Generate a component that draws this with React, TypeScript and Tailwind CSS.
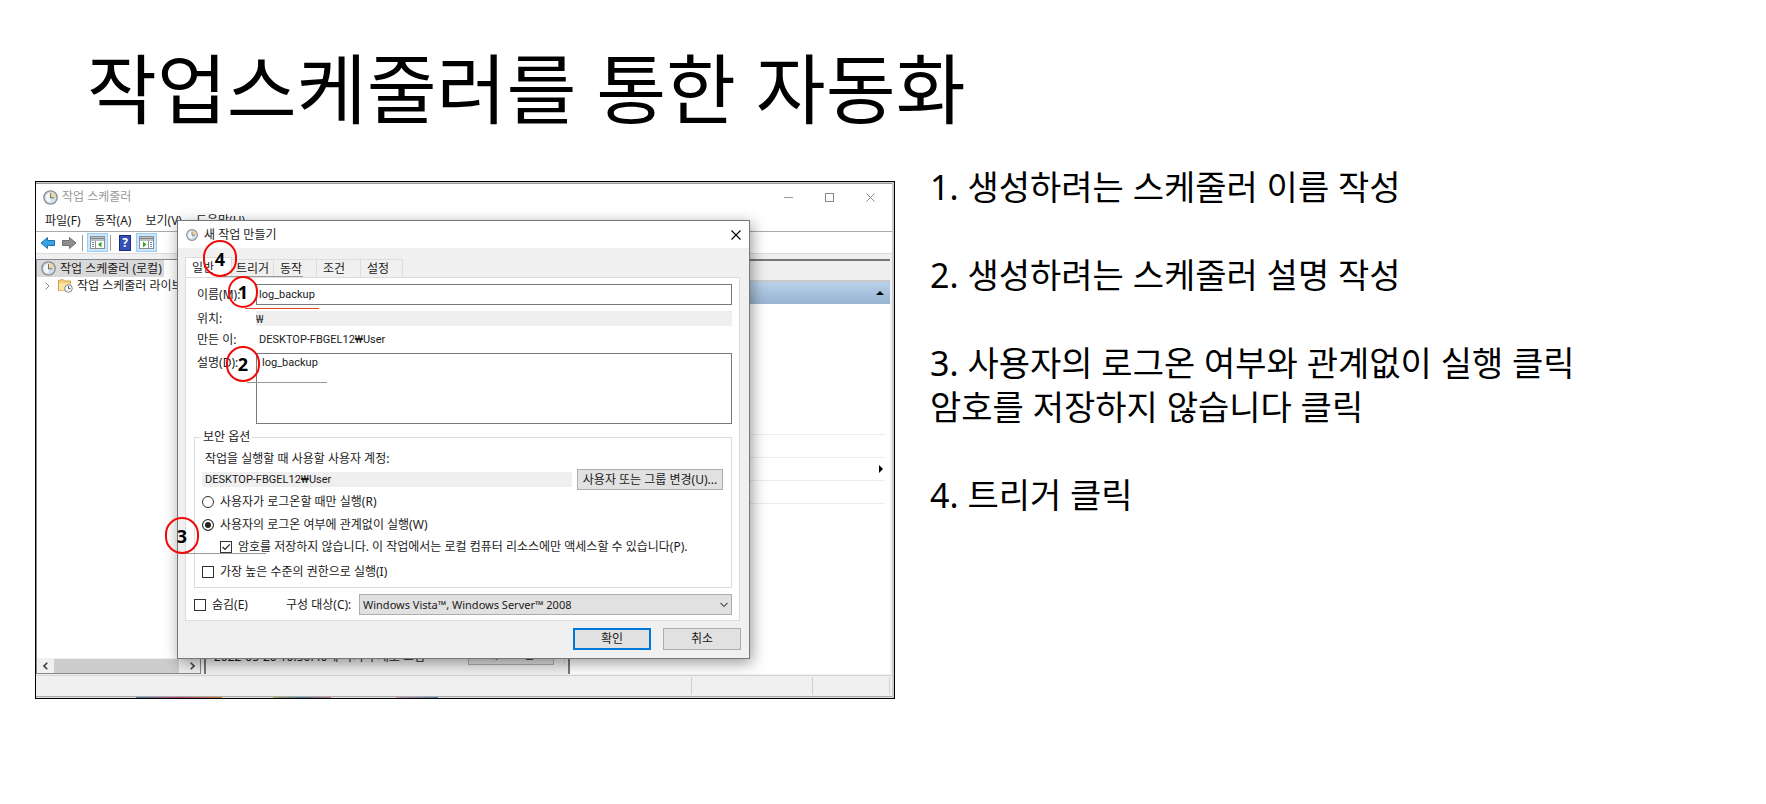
import { ReactNode } from "react";

const steps = [
  ["1. 생성하려는 스케줄러 이름 작성"],
  ["2. 생성하려는 스케줄러 설명 작성"],
  ["3. 사용자의 로그온 여부와 관계없이 실행 클릭", "암호를 저장하지 않습니다 클릭"],
  ["4. 트리거 클릭"],
];

const menus = ["파일(F)", "동작(A)", "보기(V)", "도움말(H)"];

// ---- Icons ----
function ClockIcon({ className }: { className: string }) {
  return (
    <svg className={className} viewBox="0 0 16 16" aria-hidden="true">
      <circle cx="8" cy="8" r="7.1" fill="#dfe5ea" stroke="#8b9095" strokeWidth="1.5" />
      <circle cx="8" cy="8" r="5.6" fill="#f3f7fa" stroke="#b9c6d2" strokeWidth="0.6" />
      <path d="M8 8V2.4A5.6 5.6 0 0 1 13.6 8Z" fill="#f3d69a" />
      <path d="M8 8H13.6A5.6 5.6 0 0 1 8 13.6Z" fill="#d3e0ea" />
      <path d="M8 3.5V8.3H12" fill="none" stroke="#66727e" strokeWidth="1.1" />
    </svg>
  );
}

function ArrowIcon({ fill, stroke, flip }: { fill: string; stroke: string; flip?: boolean }) {
  return (
    <svg className={flip ? "h-4 w-4 -scale-x-100" : "h-4 w-4"} viewBox="0 0 16 16" aria-hidden="true">
      <path d="M1 8 7.5 2.5V5.5H14.5V10.5H7.5V13.5Z" fill={fill} stroke={stroke} strokeLinejoin="round" />
    </svg>
  );
}

function PaneIcon({ right }: { right?: boolean }) {
  return (
    <svg className="h-[13px] w-[15px]" viewBox="0 0 15 13" aria-hidden="true">
      <rect x="0.5" y="0.5" width="14" height="12" fill="#fff" stroke="#8a8f94" />
      <path d="M1 2.5H14" stroke="#7b8288" strokeWidth="2" />
      <path d="M1 4.5H14" stroke="#b8bec4" />
      <path d={right ? "M9.5 5V12" : "M5.5 5V12"} stroke="#8a8f94" />
      <path
        d={right ? "M11 6.5H13M11 8.5H13M11 10.5H13" : "M2 6.5H4M2 8.5H4M2 10.5H4"}
        stroke="#5b88b5"
      />
      <path d={right ? "M4 5.5V11.5L7.5 8.5Z" : "M11.5 5.5V11.5L8 8.5Z"} fill="#3aa52c" />
    </svg>
  );
}

function FolderIcon() {
  return (
    <svg className="h-[15px] w-[15px]" viewBox="0 0 15 15" aria-hidden="true">
      <path d="M0.5 2.5 5 1.5 6.5 3H12.5V12.5H0.5Z" fill="#f5d27a" stroke="#c79f42" />
      <path d="M1 5.5H12.5V12.5H1Z" fill="#fbe5a4" />
      <circle cx="10.5" cy="10.5" r="3.8" fill="#f4f8fb" stroke="#7c868f" />
      <path d="M10.5 8V10.7H12.5" fill="none" stroke="#4d5a68" />
    </svg>
  );
}

function CrossIcon({ className }: { className: string }) {
  return (
    <svg className={className} viewBox="0 0 10 10" aria-hidden="true">
      <path d="M0.5 0.5 9.5 9.5M9.5 0.5 0.5 9.5" stroke="currentColor" strokeWidth="1.1" />
    </svg>
  );
}

// ---- Form parts ----
function CheckBox({ label, checked }: { label: string; checked?: boolean }) {
  return (
    <label className="flex items-center gap-[6px]">
      <span className="grid">
        <input
          type="checkbox"
          defaultChecked={checked}
          className="peer col-start-1 row-start-1 h-3 w-3 appearance-none border border-[#333] bg-white"
        />
        <svg
          className="pointer-events-none invisible col-start-1 row-start-1 h-3 w-3 peer-checked:visible"
          viewBox="0 0 12 12"
          aria-hidden="true"
        >
          <path d="M2.5 6 5 8.5 9.8 3.3" fill="none" stroke="#222" strokeWidth="1.2" />
        </svg>
      </span>
      {label}
    </label>
  );
}

function RadioButton({ label, checked }: { label: string; checked?: boolean }) {
  return (
    <label className="flex items-center gap-[6px]">
      <input
        type="radio"
        name="logon"
        defaultChecked={checked}
        className="h-3 w-3 appearance-none rounded-full border border-[#333] bg-white checked:bg-[#222] checked:shadow-[inset_0_0_0_2px_#fff]"
      />
      {label}
    </label>
  );
}

function Marker({ className, children }: { className: string; children: ReactNode }) {
  return (
    <span
      className={`absolute flex items-center justify-center rounded-full border-2 border-[#f00a0a] text-lg leading-none font-bold text-black ${className}`}
    >
      {children}
    </span>
  );
}

function TaskDialog() {
  return (
    <section className="relative z-10 col-start-1 row-start-1 mt-[38px] mr-[144px] mb-[39px] ml-[141px] flex flex-col border border-[#777] bg-[#f0f0f0] text-xs leading-4 text-[#1a1a1a] shadow-[2px_4px_14px_rgba(0,0,0,0.4)]">
      <header className="flex h-[27px] items-center bg-white pr-2 pl-2">
        <ClockIcon className="h-3 w-3" />
        <h2 className="ml-[6px] flex-1">새 작업 만들기</h2>
        <button type="button" aria-label="닫기">
          <CrossIcon className="h-[10px] w-[10px] text-black" />
        </button>
      </header>

      <div className="px-[7px] pt-[9px]">
        <div className="flex h-5 items-end pr-2">
          <button type="button" className="h-5 w-[47px] border border-b-0 border-[#dcdcdc] bg-white pl-[6px] text-left">
            일반
          </button>
          <button type="button" className="h-[18px] w-[41px] border-t border-[#dcdcdc] pl-1 text-left whitespace-nowrap">
            트리거
          </button>
          <button type="button" className="h-[18px] w-11 border border-b-0 border-[#dcdcdc] pl-[6px] text-left">
            동작
          </button>
          <button type="button" className="h-[18px] w-[43px] border-t border-[#dcdcdc] pl-[6px] text-left">
            조건
          </button>
          <button type="button" className="h-[18px] w-[43px] border border-b-0 border-[#dcdcdc] pl-[6px] text-left">
            설정
          </button>
        </div>

        <div className="mr-[2px] border border-[#dcdcdc] bg-white pt-[6px] pr-[7px] pb-[5px] pl-2">
          <div className="flex items-center pl-[3px]">
            <label htmlFor="name" className="w-[59px]">이름(M):</label>
            <input
              id="name"
              defaultValue="log_backup"
              className="h-[21px] min-w-0 flex-1 border border-[#7a7a7a] bg-white pl-[2px] font-['Roboto','Noto_Sans_CJK_KR',sans-serif] text-[11px]"
            />
          </div>
          <div className="mt-[6px] flex h-[15px] items-center pl-[3px]">
            <span className="w-[59px]">위치:</span>
            <span className="h-[15px] flex-1 bg-[#efefef] text-[11px] leading-[15px]">₩</span>
          </div>
          <div className="flex h-[27px] items-center pl-[3px]">
            <span className="w-[59px]">만든 이:</span>
            <span className="flex-1 pl-[3px] font-['Roboto','Noto_Sans_CJK_KR',sans-serif] text-[11px]">
              DESKTOP-FBGEL12₩User
            </span>
          </div>
          <div className="flex pl-[3px]">
            <label htmlFor="desc" className="w-[59px] pt-[2px]">설명(D):</label>
            <textarea
              id="desc"
              defaultValue="log_backup"
              className="h-[71px] min-w-0 flex-1 resize-none border border-[#7a7a7a] bg-white pt-px pl-[5px] font-['Roboto','Noto_Sans_CJK_KR',sans-serif] text-[11px]"
            />
          </div>

          {/* Security options */}
          <fieldset className="mt-[5px] min-w-0 border border-[#dcdcdc] pr-2 pb-px pl-[7px]">
            <legend className="ml-[-1px] px-[2px]">보안 옵션</legend>
            <p className="mt-[6px] h-[18px] pl-[3px]">작업을 실행할 때 사용할 사용자 계정:</p>
            <div className="flex items-center gap-[5px]">
              <span className="h-[15px] flex-1 bg-[#efefef] pl-[3px] font-['Roboto','Noto_Sans_CJK_KR',sans-serif] text-[11px] leading-[15px]">
                DESKTOP-FBGEL12₩User
              </span>
              <button
                type="button"
                className="h-[21px] w-[146px] border border-[#adadad] bg-[#e1e1e1] leading-none whitespace-nowrap"
              >
                사용자 또는 그룹 변경(U)...
              </button>
            </div>
            <div className="flex h-6 items-center">
              <RadioButton label="사용자가 로그온할 때만 실행(R)" />
            </div>
            <div className="flex h-[22px] items-center">
              <RadioButton label="사용자의 로그온 여부에 관계없이 실행(W)" checked />
            </div>
            <div className="flex h-[22px] items-center pl-[18px] whitespace-nowrap">
              <CheckBox
                label="암호를 저장하지 않습니다. 이 작업에서는 로컬 컴퓨터 리소스에만 액세스할 수 있습니다(P)."
                checked
              />
            </div>
            <div className="flex h-7 items-center">
              <CheckBox label="가장 높은 수준의 권한으로 실행(I)" />
            </div>
          </fieldset>

          <div className="mt-[6px] flex h-[21px] items-center">
            <div className="w-[92px]">
              <CheckBox label="숨김(E)" />
            </div>
            <label htmlFor="target" className="w-[73px]">구성 대상(C):</label>
            <div className="relative flex-1">
              <select
                id="target"
                className="h-[21px] w-full appearance-none border border-[#adadad] bg-[#e1e1e1] pl-[3px] text-[11px]"
              >
                <option>Windows Vista™, Windows Server™ 2008</option>
              </select>
              <svg
                className="pointer-events-none absolute top-2 right-1 h-[6px] w-2"
                viewBox="0 0 8 6"
                aria-hidden="true"
              >
                <path d="M0.5 1 4 4.5 7.5 1" fill="none" stroke="#555" strokeWidth="1.1" />
              </svg>
            </div>
          </div>
        </div>
      </div>

      <footer className="mt-[7px] mb-2 flex justify-end gap-3 pr-2">
        <button type="button" className="h-[22px] w-[78px] border-2 border-[#0078d7] bg-[#e1e1e1] leading-none">
          확인
        </button>
        <button type="button" className="h-[22px] w-[78px] border border-[#adadad] bg-[#e1e1e1] leading-none">
          취소
        </button>
      </footer>

      {/* Numbered callouts laid over the form */}
      <i className="absolute top-[55px] left-[42px] h-px w-[83px] bg-[#999]" />
      <i className="absolute top-[87px] left-[67px] h-px w-[74px] bg-[#e8452f]" />
      <i className="absolute top-[161px] left-[69px] h-px w-[80px] bg-[#999]" />
      <i className="absolute top-[332px] left-[4px] h-px w-[84px] bg-[#999]" />
      <Marker className="top-[19px] left-[25px] h-[37px] w-[34px]">4</Marker>
      <Marker className="top-[55px] left-[50px] h-[32px] w-[30px]">1</Marker>
      <Marker className="top-[125px] left-[48px] h-[36px] w-[34px]">2</Marker>
      <Marker className="top-[296px] left-[-13px] h-[37px] w-[34px]">3</Marker>
    </section>
  );
}

function SchedulerWindow() {
  return (
    <section className="col-start-1 row-start-1 mt-px mr-[2px] flex min-w-0 flex-col border-t border-[#999] bg-white text-xs leading-4 text-[#1a1a1a]">
      <header className="flex h-[26px] items-center pr-[17px] pl-[7px] text-[#999]">
        <ClockIcon className="h-[15px] w-[15px]" />
        <h2 className="ml-1 flex-1">작업 스케줄러</h2>
        <div className="flex items-center gap-8">
          <button type="button" aria-label="최소화" className="h-px w-[9px] bg-[#999]" />
          <button type="button" aria-label="최대화" className="h-[9px] w-[9px] border border-[#888]" />
          <button type="button" aria-label="닫기">
            <CrossIcon className="h-[9px] w-[9px] text-[#888]" />
          </button>
        </div>
      </header>
      <nav className="flex h-[22px] items-center gap-[14px] border-b border-[#aaa] pl-[9px]">
        {menus.map((menu) => (
          <button type="button" key={menu} className="leading-4">
            {menu}
          </button>
        ))}
      </nav>
      <div className="flex h-[22px] items-center border-b border-[#dcdcdc] pl-1">
        <button type="button" aria-label="뒤로">
          <ArrowIcon fill="#3ba0e6" stroke="#1e6fb0" />
        </button>
        <button type="button" aria-label="앞으로" className="ml-[5px]">
          <ArrowIcon fill="#8d8d8d" stroke="#6f6f6f" flip />
        </button>
        <i className="ml-[5px] h-4 w-px bg-[#999]" />
        <button
          type="button"
          aria-label="콘솔 트리"
          className="ml-1 flex h-[19px] w-[21px] items-center justify-center border border-[#99cdf5] bg-[#cce6fb]"
        >
          <PaneIcon />
        </button>
        <i className="ml-[2px] h-4 w-px bg-[#999]" />
        <button
          type="button"
          className="ml-2 h-4 w-3 border border-[#1b2a7a] bg-[#3450b4] text-xs leading-[14px] font-bold text-white"
        >
          ?
        </button>
        <button
          type="button"
          aria-label="작업 창"
          className="ml-[5px] flex h-[19px] w-[21px] items-center justify-center border border-[#99cdf5] bg-[#cce6fb]"
        >
          <PaneIcon right />
        </button>
      </div>

      <div className="flex flex-1 gap-[3px] bg-[#f0f0f0] pt-[5px] pr-[2px] pb-px">
        {/* Console tree */}
        <div className="flex w-[165px] flex-col border border-[#828790] bg-white">
          <div className="flex h-[17px] w-[127px] items-center bg-[#d9d9d9] pl-1 whitespace-nowrap">
            <ClockIcon className="mr-1 h-[15px] w-[15px] shrink-0" />
            작업 스케줄러 (로컬)
          </div>
          <div className="flex h-[17px] items-center pl-2 whitespace-nowrap">
            <svg className="mr-2 h-2 w-[5px] shrink-0" viewBox="0 0 5 8" aria-hidden="true">
              <path d="M0.5 0.5 4 4 0.5 7.5" fill="none" stroke="#888" />
            </svg>
            <span className="mr-1 shrink-0">
              <FolderIcon />
            </span>
            작업 스케줄러 라이브러리
          </div>
          <div className="mt-auto flex h-[15px] items-center bg-[#f0f0f0]">
            <svg className="mx-[6px] h-2 w-[5px]" viewBox="0 0 5 8" aria-hidden="true">
              <path d="M4.3 0.7 1 4 4.3 7.3" fill="none" stroke="#444" strokeWidth="1.6" />
            </svg>
            <i className="h-[14px] flex-1 bg-[#cdcdcd]" />
            <svg className="mr-[5px] ml-[11px] h-2 w-[5px]" viewBox="0 0 5 8" aria-hidden="true">
              <path d="M0.7 0.7 4 4 0.7 7.3" fill="none" stroke="#444" strokeWidth="1.6" />
            </svg>
          </div>
        </div>

        {/* Summary */}
        <div className="flex min-w-0 flex-1 flex-col justify-end border-t-2 border-l-2 border-[#777]">
          <div className="mb-[9px] flex items-end justify-between border-r border-[#dcdcdc] pr-[10px] pl-2">
            <span className="whitespace-nowrap">2022-05-20 10:50:40에 마지막 새로 고침</span>
            <button type="button" className="h-[21px] w-[86px] border border-[#adadad] bg-[#e1e1e1] leading-none">
              새로 고침
            </button>
          </div>
        </div>

        {/* Actions */}
        <div className="w-[322px] border-t-2 border-l-2 border-[#777] bg-white">
          <div className="h-[21px] border-b-2 border-[#c8c8c8] bg-[#efefef]" />
          <div className="flex h-[22px] items-center justify-end bg-gradient-to-b from-[#b9d1ea] to-[#99b4d1] pr-[6px]">
            <svg className="h-1 w-2" viewBox="0 0 8 4" aria-hidden="true">
              <path d="M0 4 4 0 8 4Z" fill="#000" />
            </svg>
          </div>
          <div className="mt-[130px] mr-[5px] divide-y divide-[#ececec] border-y border-[#ececec]">
            <div className="h-[23px]" />
            <div className="flex h-[23px] items-center justify-end pr-[2px]">
              <svg className="h-2 w-1" viewBox="0 0 4 8" aria-hidden="true">
                <path d="M0 0 4 4 0 8Z" fill="#000" />
              </svg>
            </div>
            <div className="h-[22px]" />
          </div>
        </div>
      </div>

      <footer className="flex h-[21px] justify-end border-t border-[#d5d5d5] bg-[#f0f0f0] py-px">
        <i className="w-[121px] border-l border-[#d0d0d0]" />
        <i className="w-[78px] border-x border-[#d0d0d0]" />
        <i className="w-[2px]" />
      </footer>
      <div className="flex h-[2px] border-t border-[#aaa] bg-[#ddd]">
        <i className="ml-[100px] w-[86px] bg-gradient-to-r from-[#3c78a8] via-[#b0406a] to-[#c08030]" />
        <i className="ml-[51px] w-[58px] bg-gradient-to-r from-[#b0a040] via-[#4080a0] to-[#c07080]" />
        <i className="ml-[65px] w-[42px] bg-gradient-to-r from-[#d090a0] to-[#4080b0]" />
      </div>
    </section>
  );
}

export default function App() {
  return (
    <main className="bg-white pt-[39px] pl-[35px] font-['Noto_Sans','Noto_Sans_CJK_KR',sans-serif] text-black">
      <h1 className="pl-[52px] text-[76px] leading-[100px]">작업스케줄러를 통한 자동화</h1>
      <div className="mt-[23px] grid grid-cols-[minmax(0,860fr)_minmax(0,871fr)] items-start">
        <div className="mt-[19px] grid border border-black bg-[#ccc]">
          <SchedulerWindow />
          <TaskDialog />
        </div>
        <ol className="space-y-11 pt-[3px] pl-[35px] text-[34px] leading-[44px]">
          {steps.map((lines) => (
            <li key={lines[0]}>
              {lines.map((line) => (
                <p key={line}>{line}</p>
              ))}
            </li>
          ))}
        </ol>
      </div>
    </main>
  );
}
